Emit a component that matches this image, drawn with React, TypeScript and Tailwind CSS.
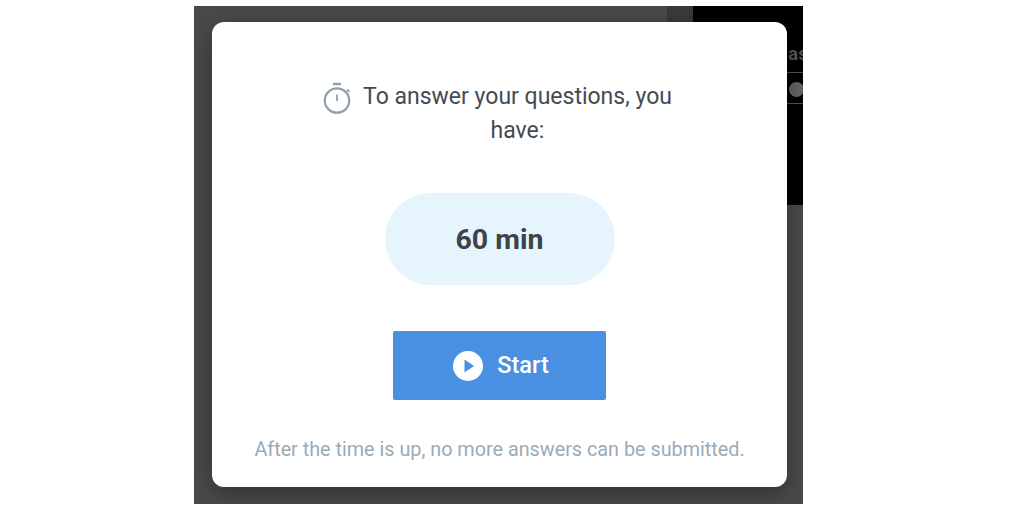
export default function App() {
  return (
    <div className="flex h-[514px] w-[1024px] overflow-hidden bg-white pl-[194px] pt-[6px] font-['Roboto',sans-serif]">
      <div className="relative h-[498px] w-[609px] overflow-hidden bg-[#4a4a4a]">
        {/* Page behind the dialog */}
        <div className="absolute left-[473px] top-0 h-[16px] w-[26px] bg-[#3a3a3a]" />
        <div className="absolute right-0 top-0 h-[199px] w-[110px] bg-black">
          <span className="absolute left-[95px] top-[38px] text-[19px] font-bold leading-5 text-[#555]">as</span>
          <div className="absolute left-[94px] top-[66px] h-px w-[16px] bg-[#555]" />
          <div className="absolute left-[96px] top-[76px] h-[15px] w-[15px] rounded-full bg-[#666]" />
          <div className="absolute left-[94px] top-[97px] h-px w-[16px] bg-[#555]" />
        </div>

        {/* Dialog */}
        <div className="absolute left-[18px] top-[16px] flex h-[465px] w-[575px] flex-col items-center rounded-[12px] bg-white shadow-[0_6px_24px_rgba(0,0,0,0.35)]">
          <div className="mr-[4px] mt-[58px] flex w-[352px] items-start justify-between">
            <svg width="30" height="32" viewBox="0 0 30 32" fill="none" stroke="#8ba0ac" className="mt-[2px] shrink-0" aria-hidden="true">
              <circle cx="15" cy="18.5" r="12.2" strokeWidth="2.2" />
              <path d="M11 2h8" strokeWidth="2.4" />
              <path d="M15 12.5v6.5" strokeWidth="1.8" />
              <path d="M25 7.5l2.4 2.4" strokeWidth="2" />
            </svg>
            <p className="w-[312px] text-center text-[23px] leading-[34px] text-[#444b52]">
              To answer your questions, you have:
            </p>
          </div>

          <div className="mt-[45px] flex h-[92px] w-[230px] items-center justify-center rounded-full bg-[#e6f4fd] pt-[2px]">
            <span className="text-[28.5px] font-bold text-[#3d4349]">60 min</span>
          </div>

          <button
            type="button"
            className="mt-[46px] flex h-[69px] w-[213px] items-center justify-center gap-[14px] rounded-[2px] bg-[#4a90e2] pl-[3px] text-[23.5px] font-medium text-white"
          >
            <svg width="30" height="30" viewBox="0 0 30 30" aria-hidden="true">
              <circle cx="15" cy="15" r="15" fill="#fff" />
              <path d="M11.5 8.5 L21 15 L11.5 21.5 Z" fill="#4a90e2" />
            </svg>
            Start
          </button>

          <p className="mt-[37px] text-[19.8px] leading-[26px] text-[#9aabb8]">
            After the time is up, no more answers can be submitted.
          </p>
        </div>
      </div>
    </div>
  );
}
